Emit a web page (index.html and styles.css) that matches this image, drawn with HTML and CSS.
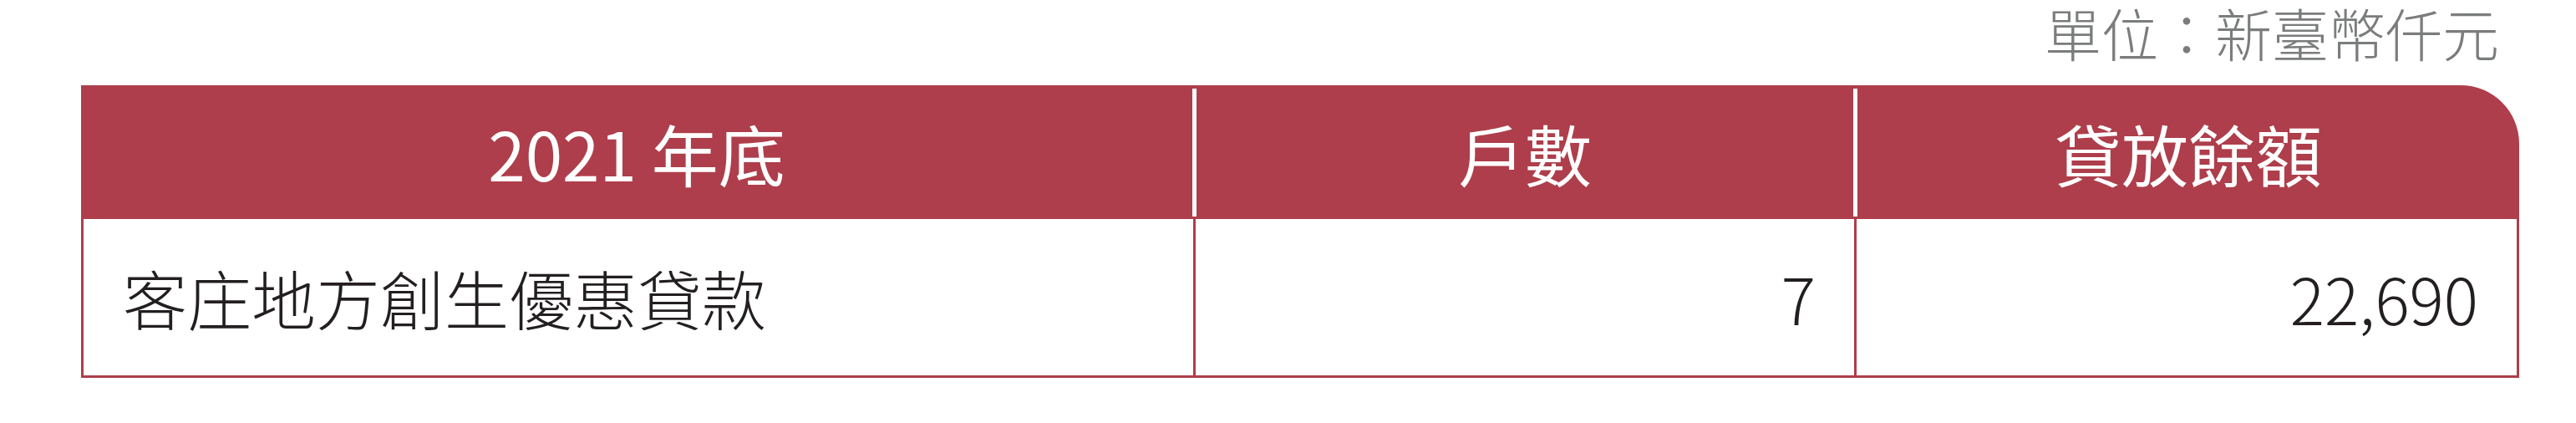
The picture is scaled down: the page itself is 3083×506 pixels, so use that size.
FILE: index.html
```html
<!DOCTYPE html>
<html lang="zh-Hant">
<head>
<meta charset="utf-8">
<title>客庄地方創生優惠貸款</title>
<link rel="stylesheet" href="styles.css">
</head>
<body>
<div class="page">
  <div class="unit">單位：新臺幣仟元</div>
  <div class="loan-table">
    <div class="row head">
      <div class="cell c1">2021 年底</div>
      <div class="cell c2">戶數</div>
      <div class="cell c3">貸放餘額</div>
    </div>
    <div class="row body">
      <div class="cell c1">客庄地方創生優惠貸款</div>
      <div class="cell c2 num">7</div>
      <div class="cell c3 num">22,690</div>
    </div>
  </div>
</div>
</body>
</html>
```

FILE: styles.css
```css
html, body {
  margin: 0;
  padding: 0;
  background: #ffffff;
}

.page {
  padding: 0 68px 0 97px;
  font-family: "Noto Sans CJK TC", "Noto Sans CJK SC", "Noto Sans", sans-serif;
}

.unit {
  font-family: "Liberation Sans", "Noto Sans CJK TC", "Noto Sans CJK SC", sans-serif;
  font-size: 68px;
  line-height: 88px;
  height: 88px;
  font-weight: 300;
  color: #7b7d7d;
  text-align: right;
  padding-right: 24px;
  margin-bottom: 14px;
}

.loan-table {
  display: flex;
  flex-direction: column;
}

.row {
  display: flex;
}

.head {
  background: #ae3e4b;
  border-top-right-radius: 70px;
  height: 160px;
  box-sizing: border-box;
  padding: 4px 0 3px;
  color: #ffffff;
  font-size: 80px;
  font-weight: 400;
}

.head .cell {
  display: flex;
  align-items: center;
  justify-content: center;
  line-height: 1;
  padding-bottom: 1px;
}

.head .c1 { width: 1330px; }
.head .c2 { width: 786px; border-left: 5px solid #ffffff; }
.head .c3 { flex: 1; border-left: 5px solid #ffffff; }

.body {
  height: 190px;
  box-sizing: border-box;
  border: 3px solid #ae3e4b;
  border-top: 0;
  color: #231f20;
  font-size: 77px;
  font-weight: 300;
}

.body .cell {
  display: flex;
  align-items: center;
  line-height: 1;
  box-sizing: border-box;
}

.body .c1 { width: 1328px; padding-left: 47px; }
.body .c2 { width: 791px; border-left: 3px solid #ae3e4b; }
.body .c3 { flex: 1; border-left: 3px solid #ae3e4b; }

.body .num {
  justify-content: flex-end;
  padding-right: 46px;
}
```
